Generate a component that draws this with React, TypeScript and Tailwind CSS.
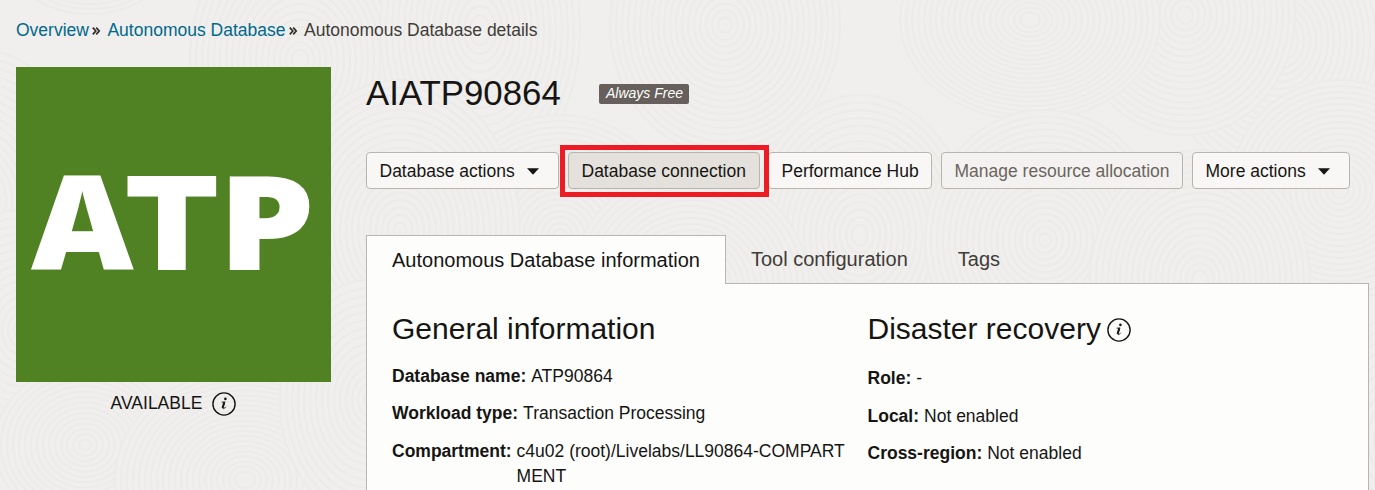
import React from "react";

const InfoIcon = () => (
  <svg width="24" height="24" viewBox="0 0 24 24" fill="none" className="shrink-0">
    <circle cx="12" cy="12" r="11.1" stroke="#161513" strokeWidth="1.4" />
    <circle cx="13.4" cy="6.9" r="1.3" fill="#161513" />
    <path d="M9.6 10.2L12.9 9.9L11 16.2C10.9 17.1 12.3 16.6 13.9 14.8" stroke="#161513" strokeWidth="0.9" />
    <path d="M12.2 10.2L10.5 16" stroke="#161513" strokeWidth="1.9" />
  </svg>
);

const Caret = () => (
  <svg width="12" height="7" viewBox="0 0 12 7" className="shrink-0">
    <path d="M0 0.3H12L6 6.7Z" fill="#161513" />
  </svg>
);

const Sep = () => (
  <svg width="9" height="8" viewBox="0 0 9 8" fill="none" className="mt-[2px] shrink-0">
    <path d="M0.8 0.6L3.8 4L0.8 7.4M4.2 0.6L7.2 4L4.2 7.4" stroke="#312d2a" strokeWidth="1.7" />
  </svg>
);

const swirls = [
  [90, -60, 90, 74], [300, 60, 110, 140], [480, 30, 100, 150], [660, -60, 90, 72],
  [725, 25, 115, 130], [1280, 40, 120, 140], [1185, 15, 110, 120], [1030, 20, 130, 100],
  [860, 235, 110, 140], [1045, 240, 120, 130], [1340, 190, 110, 110], [1200, 280, 110, 130],
  [560, 235, 120, 120], [690, 290, 120, 120], [400, 230, 120, 150], [-20, 200, 110, 150],
  [20, 330, 90, 120], [85, 445, 90, 80], [245, 480, 130, 110], [370, 400, 90, 120], [1390, 440, 70, 120],
];

const Texture = () => (
  <svg width="1375" height="490" className="absolute inset-0" fill="none">
    {swirls.map(([x, y, rx, ry], i) => (
      <g key={i} stroke="#ecebe9" strokeWidth="2">
        {Array.from({ length: Math.floor(rx / 6) }, (_, k) => (
          <ellipse
            key={k}
            cx={x}
            cy={y}
            rx={rx - k * 6}
            ry={(rx - k * 6) * (ry / rx)}
            fill={k === 0 ? "#f0efed" : "none"}
          />
        ))}
      </g>
    ))}
  </svg>
);

const btn = "flex h-[37px] shrink-0 items-center rounded-[4px] border border-[#b9b5ae] pt-px pl-[12.5px] text-[17.5px] whitespace-nowrap";

const Row = ({ label, children }: { label: string; children: React.ReactNode }) => (
  <div className="flex items-start gap-[5px] leading-[25px]">
    <b className="shrink-0">{label}</b>
    <span>{children}</span>
  </div>
);

export default function App() {
  return (
    <div className="relative h-[490px] w-[1375px] overflow-hidden bg-[#f0efed] font-['Liberation_Sans',Arial,sans-serif] text-[17.5px] text-[#161513]">
      <Texture />
      <div className="relative">
        <nav className="flex h-[60px] items-center pl-4 leading-5 text-[#00688c]">
          <a>Overview</a>
          <span className="mr-[6.5px] ml-[3px]"><Sep /></span>
          <a>Autonomous Database</a>
          <span className="mr-[6px] ml-[3.5px]"><Sep /></span>
          <span className="text-[#403c38]">Autonomous Database details</span>
        </nav>
        <div className="flex pt-[7px] pl-4">
          <aside className="w-[315px] shrink-0">
            <svg width="315" height="315" className="block bg-[#508223] font-['Open_Sans',sans-serif] text-[131.6px] font-extrabold" fill="#fff">
              <text transform="translate(15 203) scale(1.075 1)">A</text>
              <text transform="translate(107.8 203) scale(1.084 1)" className="font-['Inter',sans-serif] text-[129.3px] font-black">T</text>
              <text transform="translate(202 203) scale(1.165 1)">P</text>
            </svg>
            <div className="flex items-start justify-center gap-[10px] pt-[10px]">
              <span className="leading-[22px]">AVAILABLE</span>
              <InfoIcon />
            </div>
          </aside>
          <main className="ml-[35px] w-[1003px] shrink-0">
            <div className="flex h-[52px] items-center">
              <h1 className="w-[195px] text-[34.8px] leading-[52px]">AIATP90864</h1>
              <span className="mt-[2px] ml-[38px] flex h-5 w-[90px] items-center justify-center rounded-[2px] bg-[#665f5b] pb-px pl-px text-[14px] text-white italic">Always Free</span>
            </div>
            <div className="mt-[33px] flex">
              <button className={btn + " w-[193px] gap-[12px] bg-[#f8f7f5]"}>Database actions <Caret /></button>
              <div className="relative ml-[9px]">
                <button className={btn + " w-[192px] bg-[#e4e1dc]"}>Database connection</button>
                <div className="absolute -top-[7px] -left-[8px] z-10 h-[52px] w-[209px] border-[5px] border-[#ed1c24]" />
              </div>
              <button className={btn + " ml-[8px] w-[164px] bg-[#f8f7f5]"}>Performance Hub</button>
              <button className={btn + " ml-[9px] w-[242px] bg-[#f4f2f0] text-[#6b6560]"}>Manage resource allocation</button>
              <button className={btn + " ml-[9px] w-[158px] gap-[12px] bg-[#f8f7f5]"}>More actions <Caret /></button>
            </div>
            <div className="mt-[46px] flex h-[49px] text-[20px]">
              <div className="relative z-10 flex w-[360px] items-center border border-b-0 border-[#b9b5b0] bg-[#fdfdfc] pl-[25px]">Autonomous Database information</div>
              <div className="flex items-center pb-[2px] pl-[25px] text-[#403c38]">Tool configuration</div>
              <div className="flex items-center pb-[2px] pl-[50px] text-[#403c38]">Tags</div>
            </div>
            <div className="-mt-px flex h-[260px] border border-[#b9b5b0] bg-[#fdfdfc] pt-[25px] pl-[25px]">
              <section className="w-[475.5px] shrink-0">
                <h2 className="text-[30px] leading-10">General information</h2>
                <div className="mt-[15px] flex flex-col gap-[12.4px]">
                  <Row label="Database name:">ATP90864</Row>
                  <Row label="Workload type:">Transaction Processing</Row>
                  <Row label="Compartment:">c4u02 (root)/Livelabs/LL90864-COMPART<br />MENT</Row>
                </div>
              </section>
              <section>
                <h2 className="flex items-center gap-[6px] text-[30px] leading-10">Disaster recovery <span className="mt-[2px]"><InfoIcon /></span></h2>
                <div className="mt-[17px] flex flex-col gap-[12.5px]">
                  <Row label="Role:">-</Row>
                  <Row label="Local:">Not enabled</Row>
                  <Row label="Cross-region:">Not enabled</Row>
                </div>
              </section>
            </div>
          </main>
        </div>
      </div>
    </div>
  );
}
